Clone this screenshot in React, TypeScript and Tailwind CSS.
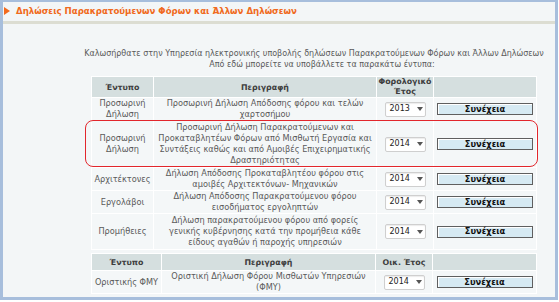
import React from "react";

const FONT = "font-['DejaVu_Sans','Verdana',sans-serif]";

function Sel({ y }: { y: string }) {
  return (
    <div className="mx-auto flex h-[15px] w-[41px] items-center rounded-[2px] border border-[#cfcfcf] bg-white pl-[4px] text-[8px] leading-none text-[#222] shadow-[inset_0_1px_1px_rgba(0,0,0,0.08)]">
      <span>{y}</span>
      <svg width="6" height="4" viewBox="0 0 6 4" className="ml-[7px]">
        <path d="M0 0H6L3 4Z" fill="#555" />
      </svg>
    </div>
  );
}

function Btn() {
  return (
    <div className="mx-auto flex h-[12px] w-[96px] items-center justify-center border border-[#5f5f5f] bg-[#d6eaf3] text-[8.3px] font-bold leading-none text-[#111] shadow-[inset_1px_1px_0_#ffffff]">
      Συνέχεια
    </div>
  );
}

const td = "border border-white bg-[#f4f7f8] p-0 text-center align-middle whitespace-nowrap";
const th = "border border-white bg-[#d5dfdf] p-0 text-center align-middle text-[7.9px] font-bold text-[#3e3e3e] whitespace-nowrap";

type Row = { form: string[]; desc: string[]; year: string; h: string };

const rows: Row[] = [
  {
    form: ["Προσωρινή", "Δήλωση"],
    desc: ["Προσωρινή Δήλωση Απόδοσης φόρου και τελών", "χαρτοσήμου"],
    year: "2013",
    h: "h-[22px]",
  },
  {
    form: ["Προσωρινή", "Δήλωση"],
    desc: [
      "Προσωρινή Δήλωση Παρακρατούμενων και",
      "Προκαταβλητέων Φόρων από Μισθωτή Εργασία και",
      "Συντάξεις καθώς και από Αμοιβές Επιχειρηματικής",
      "Δραστηριότητας",
    ],
    year: "2014",
    h: "h-[47px]",
  },
  {
    form: ["Αρχιτέκτονες"],
    desc: ["Δήλωση Απόδοσης Προκαταβλητέου φόρου στις", "αμοιβές Αρχιτεκτόνων- Μηχανικών"],
    year: "2014",
    h: "h-[23px]",
  },
  {
    form: ["Εργολάβοι"],
    desc: ["Δήλωση Απόδοσης Παρακρατούμενου φόρου", "εισοδήματος εργοληπτών"],
    year: "2014",
    h: "h-[22px]",
  },
  {
    form: ["Προμήθειες"],
    desc: [
      "Δήλωση παρακρατούμενου φόρου από φορείς",
      "γενικής κυβέρνησης κατά την προμήθεια κάθε",
      "είδους αγαθών ή παροχής υπηρεσιών",
    ],
    year: "2014",
    h: "h-[36px]",
  },
];

function Lines({ l }: { l: string[] }) {
  return (
    <>
      {l.map((s, i) => (
        <div key={i}>{s}</div>
      ))}
    </>
  );
}

export default function App() {
  return (
    <div className={`relative h-[302px] w-[559px] overflow-hidden bg-white ${FONT}`}>
      <div className="flex h-[300px] w-[558px] flex-col border-b-[3px] border-l-[3px] border-r-[3px] border-t-2 border-[#a7bedc] bg-[#f3f6f7]">
        {/* header */}
        <div className="flex h-[22px] shrink-0 items-center border-b-[3px] border-[#dcddd2] bg-[#f3f6f7] pl-[1px]">
          <svg width="6" height="8" viewBox="0 0 6 8" className="mr-[6px] mt-[-1px]">
            <path d="M0 0L6 4L0 8Z" fill="#f26a1e" />
          </svg>
          <span className="text-[8.6px] font-bold leading-none text-[#f06a20]">
            Δηλώσεις Παρακρατούμενων Φόρων και Άλλων Δηλώσεων
          </span>
        </div>

        {/* welcome */}
        <div className="ml-[72px] mt-[24px] flex w-[478px] flex-col items-center text-[8px] leading-[11px] text-[#5a5a5a]">
          <div className="whitespace-nowrap">
            Καλωσήρθατε στην Υπηρεσία ηλεκτρονικής υποβολής δηλώσεων Παρακρατούμενων Φόρων και Άλλων Δηλώσεων
          </div>
          <div className="ml-[16px] whitespace-nowrap">Από εδώ μπορείτε να υποβάλλετε τα παρακάτω έντυπα:</div>
        </div>

        {/* table 1 */}
        <table className="ml-[88px] mt-[6px] w-[445px] table-fixed border-collapse text-[8.2px] leading-[11px] text-[#5a5a5a]">
          <colgroup>
            <col className="w-[62px]" />
            <col className="w-[223px]" />
            <col className="w-[57px]" />
            <col className="w-[103px]" />
          </colgroup>
          <tbody>
            <tr>
              <td className={`${th} h-[21px]`}>Έντυπο</td>
              <td className={th}>Περιγραφή</td>
              <td className={`${th} leading-[10px]`}>
                <div>Φορολογικό</div>
                <div>Έτος</div>
              </td>
              <td className={th}></td>
            </tr>
            {rows.map((r, i) => (
              <tr key={i}>
                <td className={`${td} ${r.h}`}>
                  <Lines l={r.form} />
                </td>
                <td className={td}>
                  <Lines l={r.desc} />
                </td>
                <td className={td}>
                  <Sel y={r.year} />
                </td>
                <td className={td}>
                  <Btn />
                </td>
              </tr>
            ))}
          </tbody>
        </table>

        {/* table 2 */}
        <table className="ml-[88px] mt-[3px] w-[445px] table-fixed border-collapse text-[8.2px] leading-[11px] text-[#5a5a5a]">
          <colgroup>
            <col className="w-[70px]" />
            <col className="w-[214px]" />
            <col className="w-[57px]" />
            <col className="w-[104px]" />
          </colgroup>
          <tbody>
            <tr>
              <td className={`${th} h-[17px]`}>Έντυπο</td>
              <td className={th}>Περιγραφή</td>
              <td className={th}>Οικ. Έτος</td>
              <td className={th}></td>
            </tr>
            <tr>
              <td className={`${td} h-[21px]`}>Οριστικής ΦΜΥ</td>
              <td className={td}>
                <Lines l={["Οριστική Δήλωση Φόρου Μισθωτών Υπηρεσιών", "(ΦΜΥ)"]} />
              </td>
              <td className={td}>
                <Sel y="2014" />
              </td>
              <td className={td}>
                <Btn />
              </td>
            </tr>
          </tbody>
        </table>
      </div>

      {/* red highlight annotation */}
      <div className="pointer-events-none absolute left-[85px] top-[120px] h-[47px] w-[453px] rounded-[8px] border border-[#e2262c]" />
    </div>
  );
}
